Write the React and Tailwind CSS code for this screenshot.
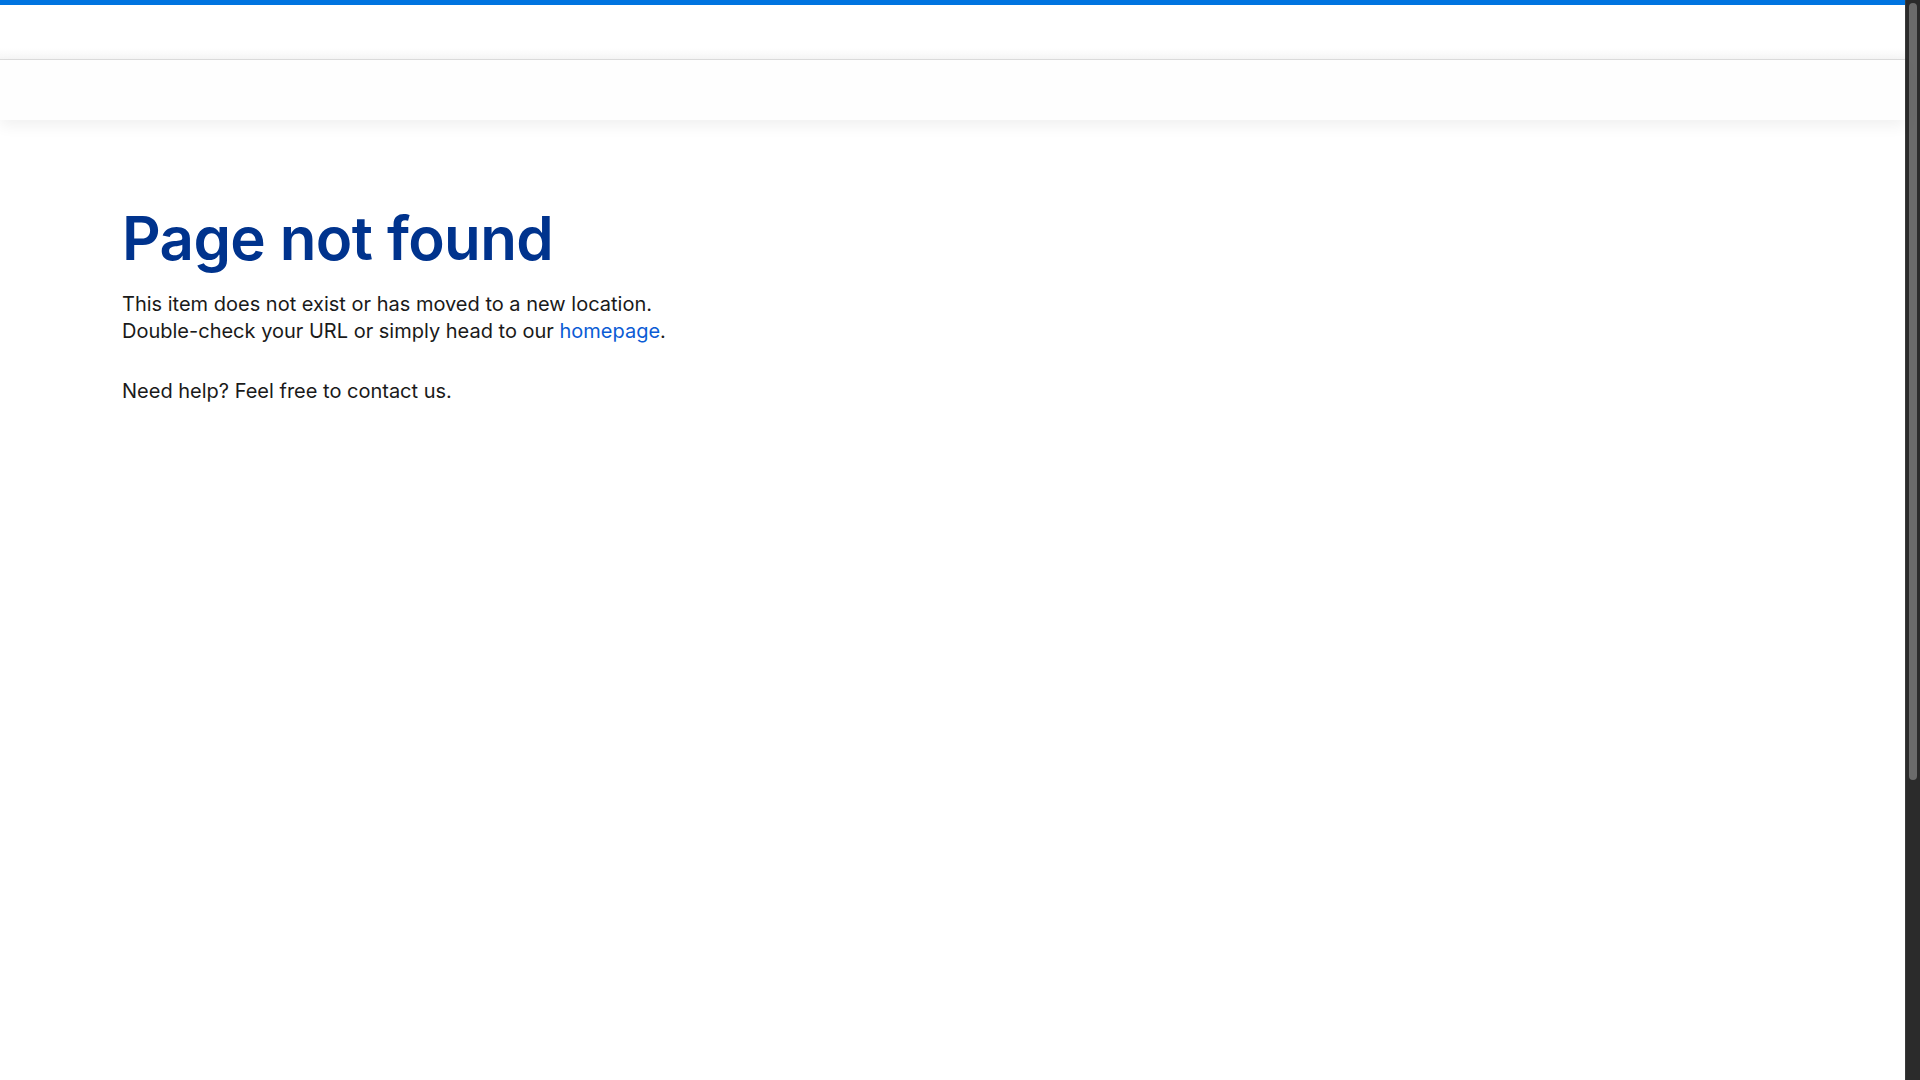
export default function App() {
  return (
    <div className="flex h-screen w-full overflow-hidden bg-white" style={{ fontFamily: 'Inter, "Liberation Sans", sans-serif' }}>
      <div className="flex min-w-0 flex-1 flex-col">
        <div className="h-[5px] bg-[#0074e0]" />
        <div className="h-[55px] border-b border-[#dcdcdc] bg-gradient-to-b from-white from-80% to-[#f6f6f6]" />
        <div className="relative h-[60px] bg-[#fefefe] shadow-[0_6px_14px_rgba(0,0,0,0.06)]" />
        <main className="px-[122px] pt-[82px]">
          <h1 className="text-[60px] font-semibold leading-[72px] tracking-[-0.01em] text-[#00338d]">Page not found</h1>
          <div className="mt-[17px] text-[20px] leading-[27px] text-[#1a1a1a]">
            <p>This item does not exist or has moved to a new location.</p>
            <p>
              Double-check your URL or simply head to our <a className="text-[#0b5cd5]">homepage</a>.
            </p>
            <p className="mt-[33px]">Need help? Feel free to contact us.</p>
          </div>
        </main>
      </div>
      <div className="flex w-[15px] flex-col border-l border-[#3a3a3a] bg-[#2b2b2b] pt-[3px]">
        <div className="mx-auto h-[777px] w-[8px] rounded-full bg-[#6b6b6b]" />
      </div>
    </div>
  );
}
